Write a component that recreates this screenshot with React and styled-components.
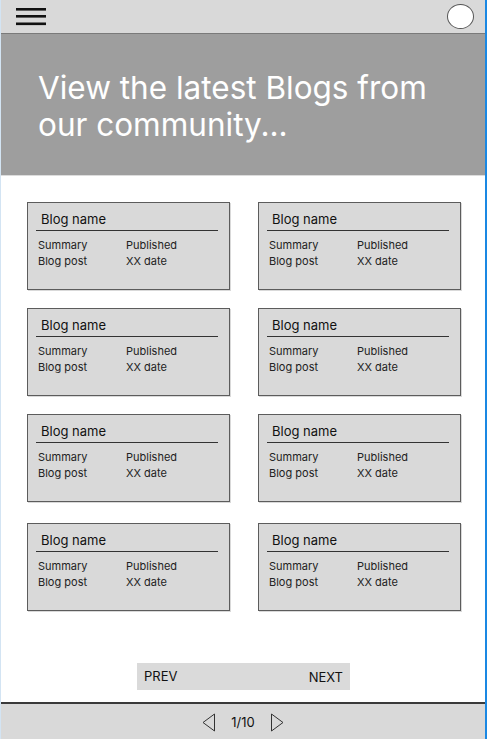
import React from 'react';
import styled, { createGlobalStyle } from 'styled-components';

const GlobalStyle = createGlobalStyle`
  * { box-sizing: border-box; }
  html, body { margin: 0; padding: 0; background: #ffffff; }
  body { font-family: Inter, "Noto Sans", sans-serif; color: #111; }
`;

const blogs = [
  { id: 1 }, { id: 2 }, { id: 3 }, { id: 4 },
  { id: 5 }, { id: 6 }, { id: 7 }, { id: 8 },
];

const App = () => {
  const rows = [blogs.slice(0, 2), blogs.slice(2, 4), blogs.slice(4, 6), blogs.slice(6, 8)];
  return (
    <Frame>
      <GlobalStyle />
      <Header>
        <svg width="31" height="19" viewBox="0 0 31 19">
          <rect x="0" y="1" width="30" height="2.6" fill="#111" />
          <rect x="0" y="8" width="30" height="2.6" fill="#111" />
          <rect x="0" y="15.5" width="30" height="2.6" fill="#111" />
        </svg>
        <Avatar />
      </Header>
      <Hero>
        <HeroTitle>
          View the latest Blogs from
          <br />
          our community...
        </HeroTitle>
      </Hero>
      <Main>
        {rows.map((row, i) => (
          <Row key={i} $extra={i === 3 ? 3 : 0}>
            {row.map((blog) => (
              <Card key={blog.id}>
                <CardTitle>Blog name</CardTitle>
                <CardBody>
                  <span>Summary</span>
                  <span>Published</span>
                  <span>Blog post</span>
                  <span>XX date</span>
                </CardBody>
              </Card>
            ))}
          </Row>
        ))}
        <Pager>
          <PagerLabel $drop={0}>PREV</PagerLabel>
          <PagerLabel $drop={1}>NEXT</PagerLabel>
        </Pager>
      </Main>
      <Footer>
        <svg width="14" height="19" viewBox="0 0 14 19">
          <polygon points="12.5,1 1,9.5 12.5,18" fill="none" stroke="#333" strokeWidth="1" />
        </svg>
        <PageCount>1/10</PageCount>
        <svg width="14" height="19" viewBox="0 0 14 19">
          <polygon points="1.5,1 13,9.5 1.5,18" fill="none" stroke="#333" strokeWidth="1" />
        </svg>
      </Footer>
    </Frame>
  );
};

const Frame = styled.div`
  display: flex;
  flex-direction: column;
  min-height: 100vh;
  width: 487px;
  border-left: 1px solid #d3e4f3;
  border-right: 2px solid #1a88e3;
`;

const Header = styled.header`
  display: flex;
  align-items: center;
  justify-content: space-between;
  height: 34px;
  padding: 0 11px 0 15px;
  background: #d9d9d9;
  border-bottom: 1px solid #7a7a7a;
`;

const Avatar = styled.div`
  width: 27px;
  height: 25px;
  border-radius: 50%;
  background: #ffffff;
  border: 1px solid #555;
`;

const Hero = styled.section`
  height: 142px;
  padding: 35px 0 0 37px;
  background: #9e9e9e;
  border-bottom: 1px solid #dcdcdc;
`;

const HeroTitle = styled.h1`
  margin: 0;
  font-size: 31.5px;
  line-height: 37px;
  font-weight: 400;
  color: #ffffff;
`;

const Main = styled.main`
  display: flex;
  flex-direction: column;
  padding: 26px 0 0 26px;
`;

const Row = styled.div`
  display: flex;
  gap: 28px;
  margin-bottom: 18px;
  margin-top: ${(p) => p.$extra}px;
`;

const Card = styled.div`
  width: 203px;
  height: 88px;
  background: #d9d9d9;
  border: 1px solid #5c5c5c;
  box-shadow: 1px 1px 0 rgba(0, 0, 0, 0.15);
`;

const CardTitle = styled.div`
  margin: 8px 11px 0 8px;
  padding: 0 0 3px 5px;
  font-size: 13px;
  line-height: 16px;
  border-bottom: 1px solid #333;
`;

const CardBody = styled.div`
  display: grid;
  grid-template-columns: 88px 1fr;
  margin: 6px 0 0 10px;
  font-size: 11px;
  line-height: 16px;
  color: #222;
`;

const Pager = styled.div`
  display: flex;
  justify-content: space-between;
  align-items: flex-start;
  align-self: flex-start;
  width: 213px;
  height: 27px;
  margin: 34px 0 0 110px;
  padding: 5px 7px 0 7px;
  background: #dadada;
`;

const PagerLabel = styled.span`
  font-size: 13px;
  line-height: 16px;
  color: #111;
  margin-top: ${(p) => p.$drop}px;
`;

const Footer = styled.footer`
  display: flex;
  align-items: center;
  justify-content: center;
  gap: 15px;
  margin-top: auto;
  height: 37px;
  padding-top: 1px;
  background: #d9d9d9;
  border-top: 2px solid #3a3a3a;
`;

const PageCount = styled.span`
  font-size: 13px;
  line-height: 16px;
  color: #111;
`;

export default App;
